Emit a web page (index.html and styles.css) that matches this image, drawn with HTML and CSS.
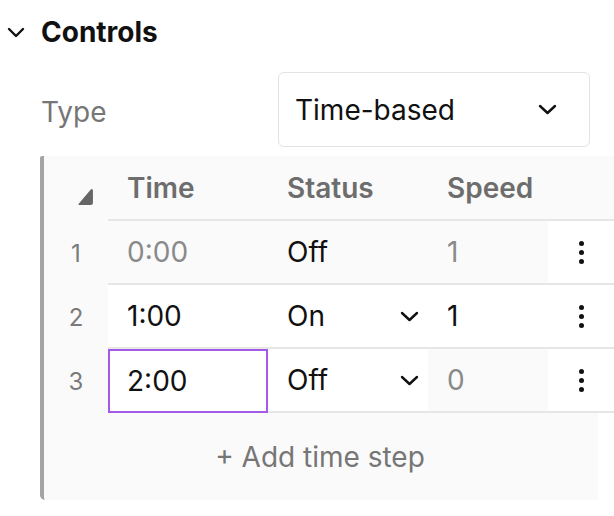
FILE: index.html
```html
<!DOCTYPE html>
<html lang="en">
<head>
<meta charset="utf-8">
<title>Controls</title>
<link rel="stylesheet" href="styles.css">
</head>
<body>
<div class="page">
  <div class="section-title">
    <svg class="title-chevron" width="18" height="11" viewBox="0 0 18 11"><path d="M2 2 L9 9 L16 2" fill="none" stroke="#111" stroke-width="2.4" stroke-linecap="round" stroke-linejoin="round"/></svg>
    <span>Controls</span>
  </div>

  <div class="type-row">
    <span class="type-label">Type</span>
    <div class="select">
      <span>Time-based</span>
      <svg width="19" height="11" viewBox="0 0 19 11"><path d="M2 2 L9.5 9 L17 2" fill="none" stroke="#111" stroke-width="2.4" stroke-linecap="round" stroke-linejoin="round"/></svg>
    </div>
  </div>

  <div class="panel">
    <div class="grid">
      <div class="hcell idx-head">
        <svg width="17" height="17" viewBox="0 0 16 16"><path d="M15 3 L15 14 Q15 16 13 16 L2.5 16 Q0.5 16 2 14.3 L12.2 2.3 Q15 -0.5 15 3 Z" fill="#666"/></svg>
      </div>
      <div class="hcell col">Time</div>
      <div class="hcell col">Status</div>
      <div class="hcell col">Speed</div>
      <div class="hcell col"></div>

      <div class="idx">1</div>
      <div class="cell muted">0:00</div>
      <div class="cell">Off</div>
      <div class="cell muted">1</div>
      <div class="cell menu white"><span class="dots"><i></i><i></i><i></i></span></div>

      <div class="idx">2</div>
      <div class="cell white">1:00</div>
      <div class="cell white status">On <svg width="19" height="11" viewBox="0 0 19 11"><path d="M2 2 L9.5 9 L17 2" fill="none" stroke="#111" stroke-width="2.4" stroke-linecap="round" stroke-linejoin="round"/></svg></div>
      <div class="cell white">1</div>
      <div class="cell menu white"><span class="dots"><i></i><i></i><i></i></span></div>

      <div class="idx">3</div>
      <div class="cell white focused">2:00</div>
      <div class="cell white status">Off <svg width="19" height="11" viewBox="0 0 19 11"><path d="M2 2 L9.5 9 L17 2" fill="none" stroke="#111" stroke-width="2.4" stroke-linecap="round" stroke-linejoin="round"/></svg></div>
      <div class="cell muted">0</div>
      <div class="cell menu white"><span class="dots"><i></i><i></i><i></i></span></div>
    </div>
    <div class="add-step">+ Add time step</div>
  </div>
</div>
</body>
</html>
```

FILE: styles.css
```css
html, body {
  margin: 0;
  padding: 0;
  background: #ffffff;
  overflow: hidden;
}

body {
  font-family: "Inter", "Liberation Sans", sans-serif;
  font-size: 28px;
  color: #111111;
}

.page {
  width: 614px;
  height: 516px;
}

.section-title {
  display: flex;
  align-items: center;
  margin-top: 15px;
  height: 34px;
  font-weight: 700;
  color: #111111;
}

.title-chevron {
  margin-left: 7px;
  margin-right: 16px;
}

.type-row {
  display: flex;
  align-items: center;
  margin-top: 23px;
  padding-left: 41px;
}

.type-label {
  width: 237px;
  color: #767676;
  padding-top: 4px;
}

.select {
  box-sizing: border-box;
  width: 312px;
  height: 75px;
  border: 1.5px solid #e3e3e3;
  border-radius: 6px;
  display: flex;
  align-items: center;
  justify-content: space-between;
  padding: 0 32px 0 16px;
}

.panel {
  margin-top: 9px;
  margin-left: 40px;
  width: 558px;
  box-sizing: border-box;
  border-left: 4px solid #a4a4a4;
  border-radius: 2px 0 0 5px;
  background: #fafafa;
}

.grid {
  display: grid;
  grid-template-columns: 64px 160px 160px 120px 70px;
  width: 574px;
  background: #fafafa;
}

.hcell {
  box-sizing: border-box;
  height: 65px;
  font-weight: 600;
  color: #6d6d6d;
  display: flex;
  align-items: center;
}

.hcell.col {
  border-bottom: 2px solid #e6e6e6;
  padding-left: 19px;
}

.idx-head {
  align-items: flex-start;
  padding-left: 33px;
  padding-top: 32px;
}

.idx {
  height: 64px;
  display: flex;
  align-items: center;
  justify-content: center;
  font-size: 24px;
  color: #7a7a7a;
}

.cell {
  box-sizing: border-box;
  height: 64px;
  border-bottom: 2px solid #e6e6e6;
  display: flex;
  align-items: center;
  padding-left: 19px;
}

.cell.white {
  background: #ffffff;
}

.cell.muted {
  color: #8a8a8a;
}

.cell.status {
  justify-content: space-between;
  padding-right: 9px;
}

.cell.focused {
  border: 2px solid #a55ae6;
  padding-left: 17px;
}

.cell.menu {
  padding-left: 31px;
}

.dots {
  display: flex;
  flex-direction: column;
  gap: 4px;
}

.dots i {
  display: block;
  width: 5px;
  height: 5px;
  border-radius: 50%;
  background: #111111;
}

.add-step {
  height: 87px;
  display: flex;
  align-items: center;
  justify-content: center;
  color: #767676;
  padding-right: 2px;
}
```
